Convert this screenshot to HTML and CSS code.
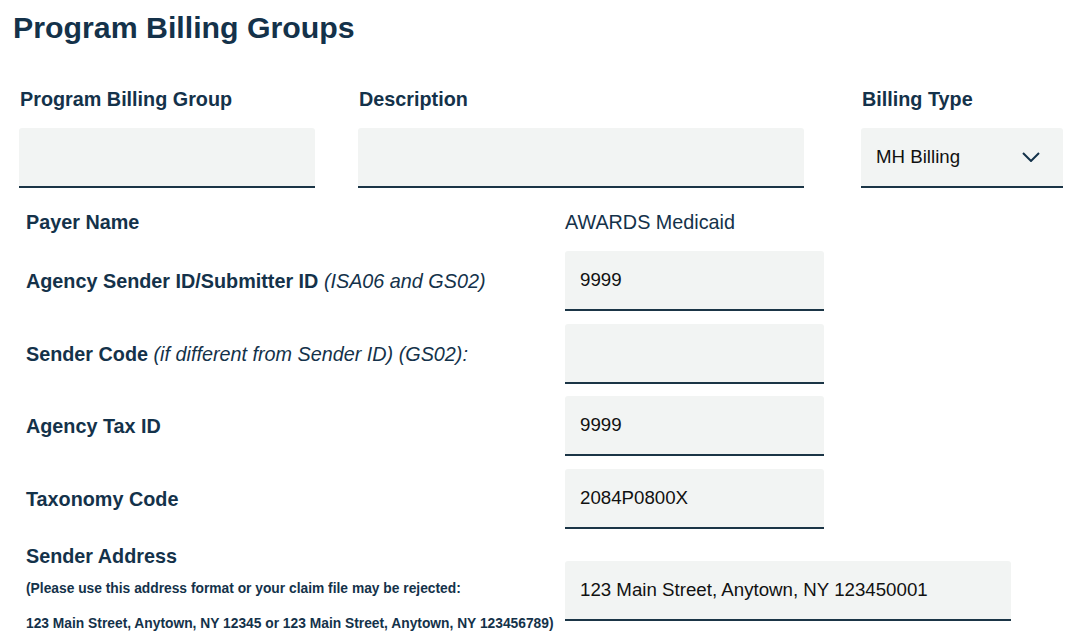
FILE: index.html
```html
<!DOCTYPE html>
<html>
<head>
<meta charset="utf-8">
<link rel="stylesheet" href="styles.css">
</head>
<body>
<div class="page">
  <h1 class="title">Program Billing Groups</h1>
  <div class="top-row">
    <div class="field f1">
      <label class="lbl">Program Billing Group</label>
      <div class="box"></div>
    </div>
    <div class="field f2">
      <label class="lbl">Description</label>
      <div class="box"></div>
    </div>
    <div class="field f3">
      <label class="lbl">Billing Type</label>
      <div class="box select">
        <span class="val">MH Billing</span>
        <svg class="chev" width="18" height="10" viewBox="0 0 18 10"><path d="M1 1 L9 9 L17 1" fill="none" stroke="#14324a" stroke-width="2"/></svg>
      </div>
    </div>
  </div>
  <div class="rows">
    <div class="row payer">
      <div class="rlbl">Payer Name</div>
      <div class="static">AWARDS Medicaid</div>
    </div>
    <div class="row">
      <div class="rlbl">Agency Sender ID/Submitter ID <i>(ISA06 and GS02)</i></div>
      <div class="box small"><span class="val">9999</span></div>
    </div>
    <div class="row">
      <div class="rlbl">Sender Code <i>(if different from Sender ID) (GS02):</i></div>
      <div class="box small"></div>
    </div>
    <div class="row">
      <div class="rlbl">Agency Tax ID</div>
      <div class="box small"><span class="val">9999</span></div>
    </div>
    <div class="row">
      <div class="rlbl">Taxonomy Code</div>
      <div class="box small"><span class="val">2084P0800X</span></div>
    </div>
    <div class="row addr">
      <div class="rlbl-block">
        <div class="rlbl">Sender Address</div>
        <p class="note">(Please use this address format or your claim file may be rejected:</p>
        <p class="note">123 Main Street, Anytown, NY 12345 or 123 Main Street, Anytown, NY 123456789)</p>
      </div>
      <div class="box wide"><span class="val">123 Main Street, Anytown, NY 123450001</span></div>
    </div>
  </div>
</div>
</body>
</html>
```

FILE: styles.css
```css
html, body {
  margin: 0;
  padding: 0;
  background: #ffffff;
}
body {
  font-family: "Liberation Sans", Arial, sans-serif;
  color: #14324a;
  overflow: hidden;
}
.page {
  padding: 8px 0 0 12px;
}
.title {
  margin: 0;
  font-size: 30.3px;
  font-weight: bold;
  line-height: 40px;
  color: #14324a;
  padding-left: 1px;
}
.top-row {
  display: flex;
  margin-top: 39px;
  padding-left: 7px;
}
.field {
  display: flex;
  flex-direction: column;
}
.f1 { width: 296px; margin-right: 43px; }
.f2 { width: 446px; margin-right: 57px; }
.f3 { width: 202px; }
.lbl {
  font-size: 19.8px;
  font-weight: bold;
  line-height: 24px;
  padding-left: 1px;
  margin-bottom: 17px;
}
.box {
  height: 58px;
  background: #f2f4f3;
  border-bottom: 2px solid #1b3546;
  border-radius: 3px 3px 0 0;
  display: flex;
  align-items: center;
  box-sizing: content-box;
}
.val {
  font-size: 18.7px;
  color: #111111;
  padding-left: 15px;
  line-height: 22px;
}
.select {
  justify-content: space-between;
}
.chev {
  margin-right: 23px;
  margin-top: -1px;
}
.rows {
  display: flex;
  flex-direction: column;
  gap: 12.67px;
  margin-top: 22.3px;
  padding-left: 14px;
}
.row {
  display: grid;
  grid-template-columns: 539px auto;
  align-items: center;
}
.row.payer {
  height: 28px;
  align-items: start;
}
.row.addr {
  align-items: start;
}
.rlbl {
  font-size: 19.8px;
  font-weight: bold;
  line-height: 24px;
}
.rlbl i {
  font-weight: normal;
}
.static {
  font-size: 19.8px;
  line-height: 24px;
}
.box.small { width: 259px; }
.box.wide { width: 446px; margin-top: 19.3px; }
.rlbl-block {
  padding-top: 2px;
}
.note {
  margin: 0;
  font-size: 13.8px;
  font-weight: bold;
  line-height: 16px;
}
.rlbl-block .rlbl {
  margin-bottom: 13px;
}
.rlbl-block .note + .note {
  margin-top: 19px;
}
```
